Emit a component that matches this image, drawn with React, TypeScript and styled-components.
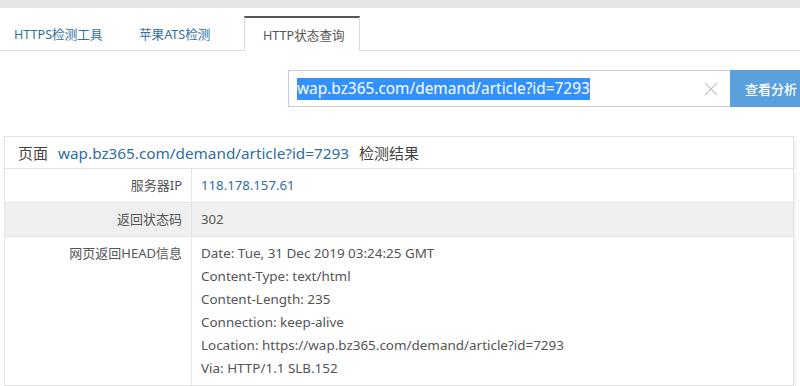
import React from "react";
import styled, { createGlobalStyle, css } from "styled-components";

const GlobalStyle = createGlobalStyle`
  html, body { margin: 0; padding: 0; background: #fff; }
  body {
    font-family: "Noto Sans", "Noto Sans CJK SC", sans-serif;
    font-size: 13px;
    color: #555;
  }
  * { box-sizing: border-box; }
`;

const Page = styled.div`
  width: 800px;
  height: 386px;
  overflow: hidden;
  display: flex;
  flex-direction: column;
`;

const TopStrip = styled.div`
  height: 8px;
  background: #e6e6e6;
`;

const TabBar = styled.div`
  height: 43px;
  display: flex;
  align-items: flex-end;
  border-bottom: 1px solid #dcdcdc;
`;

const Tab = styled.div<{ $w: number; $pl: number; $active?: boolean }>`
  width: ${(p) => p.$w}px;
  padding-left: ${(p) => p.$pl}px;
  height: 34px;
  display: flex;
  align-items: center;
  font-size: 12.6px;
  white-space: nowrap;
  color: #336f9f;
  ${(p) =>
    p.$active &&
    css`
      color: #555;
      background: #fff;
      border: 1px solid #dcdcdc;
      border-top: 2px solid #555;
      border-bottom: none;
      margin-bottom: -1px;
      height: 35px;
    `}
`;

const SearchRow = styled.div`
  display: flex;
  justify-content: flex-end;
  margin-top: 19px;
  margin-right: -12px;
  height: 37px;
`;

const InputBox = styled.div`
  width: 442px;
  height: 37px;
  border: 1px solid #ccc;
  border-right: none;
  display: flex;
  align-items: center;
  padding-left: 8px;
  padding-right: 12px;
`;

const Selected = styled.span`
  background: #3390ff;
  color: #fff;
  font-size: 15.4px;
  line-height: 22px;
  white-space: nowrap;
`;

const Spacer = styled.div`
  flex: 1;
`;

const Clear = styled.svg`
  width: 14px;
  height: 14px;
  display: block;
`;

const Button = styled.div`
  width: 82px;
  flex-shrink: 0;
  height: 37px;
  background: #5aa0dd;
  color: #fff;
  font-size: 13px;
  font-weight: 500;
  display: flex;
  align-items: center;
  justify-content: center;
  white-space: nowrap;
`;

const Result = styled.div`
  margin: 29px 6px 0 4px;
  border: 1px solid #e3e3e3;
  box-shadow: 2px 0 1px rgba(0, 0, 0, 0.04);
`;

const Header = styled.div`
  height: 32px;
  display: flex;
  align-items: center;
  padding-left: 13px;
  font-size: 15px;
  color: #444;
  border-bottom: 1px solid #e3e3e3;
  white-space: nowrap;
`;

const HeaderLink = styled.span`
  color: #2f6ea5;
  font-size: 15.3px;
  margin: 0 10px 0 10px;
`;

const Row = styled.div<{ $shade?: boolean }>`
  display: grid;
  grid-template-columns: 187px 1fr;
  background: ${(p) => (p.$shade ? "#f0f0f0" : "#fff")};
  border-bottom: 1px solid #e3e3e3;
  &:last-child { border-bottom: none; }
`;

const Label = styled.div`
  border-right: 1px solid #e3e3e3;
  text-align: right;
  padding: 0 9px 0 0;
  line-height: 33px;
  color: #555;
  white-space: nowrap;
`;

const Value = styled.div<{ $link?: boolean }>`
  padding: 0 0 0 9px;
  line-height: 33px;
  font-size: 13.2px;
  color: ${(p) => (p.$link ? "#2f6ea5" : "#555")};
  white-space: nowrap;
`;

const Lines = styled.div`
  padding: 5px 0 5px 9px;
  line-height: 23px;
  font-size: 13.45px;
  color: #555;
  white-space: nowrap;
`;

const HeadLabel = styled(Label)`
  line-height: 23px;
  padding-top: 5px;
`;

const url = "wap.bz365.com/demand/article?id=7293";
const headers = [
  "Date: Tue, 31 Dec 2019 03:24:25 GMT",
  "Content-Type: text/html",
  "Content-Length: 235",
  "Connection: keep-alive",
  "Location: https://wap.bz365.com/demand/article?id=7293",
  "Via: HTTP/1.1 SLB.152",
];

export default function App() {
  return (
    <Page>
      <GlobalStyle />
      <TopStrip />
      <TabBar>
        <Tab $w={120} $pl={14}>HTTPS检测工具</Tab>
        <Tab $w={124} $pl={19}>苹果ATS检测</Tab>
        <Tab $w={116} $pl={18} $active>HTTP状态查询</Tab>
      </TabBar>
      <SearchRow>
        <InputBox>
          <Selected>{url}</Selected>
          <Spacer />
          <Clear viewBox="0 0 14 14">
            <path d="M1 1 L13 13 M13 1 L1 13" stroke="#c6c6c6" strokeWidth="1.2" fill="none" />
          </Clear>
        </InputBox>
        <Button>查看分析</Button>
      </SearchRow>
      <Result>
        <Header>
          页面<HeaderLink>{url}</HeaderLink>检测结果
        </Header>
        <Row>
          <Label>服务器IP</Label>
          <Value $link>118.178.157.61</Value>
        </Row>
        <Row $shade>
          <Label>返回状态码</Label>
          <Value>302</Value>
        </Row>
        <Row>
          <HeadLabel>网页返回HEAD信息</HeadLabel>
          <Lines>
            {headers.map((h) => (
              <div key={h}>{h}</div>
            ))}
          </Lines>
        </Row>
      </Result>
    </Page>
  );
}
